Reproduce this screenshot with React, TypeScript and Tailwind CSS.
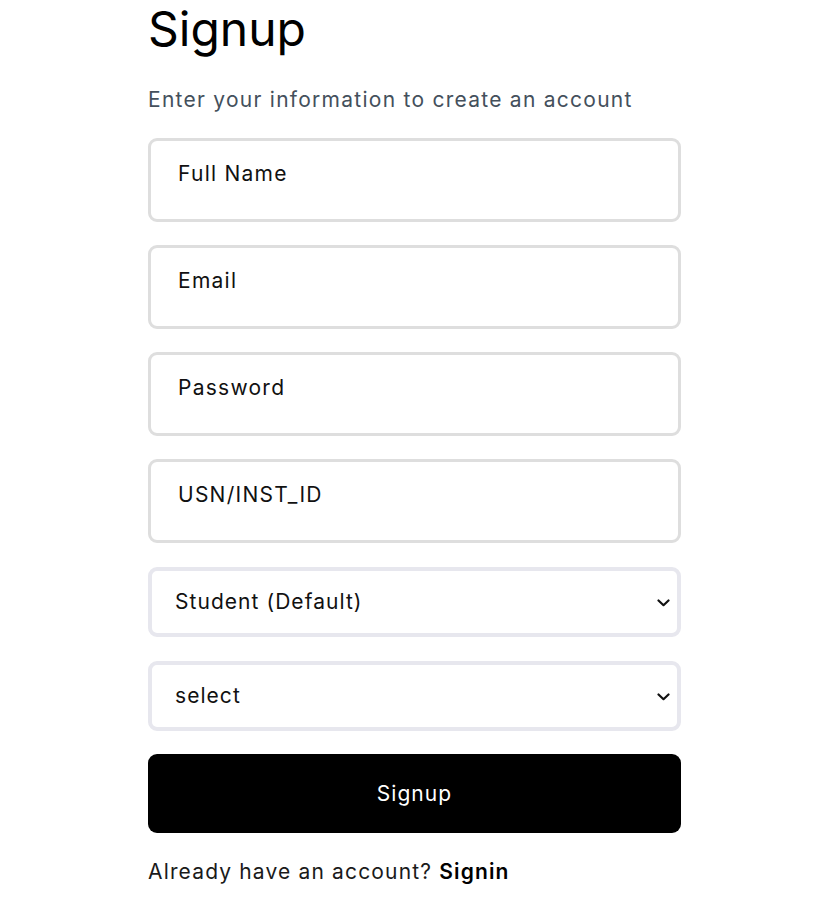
import React from 'react';

const font = { fontFamily: 'Inter, "Noto Sans", sans-serif' };

const TextField = ({ placeholder, type = 'text' }: { placeholder: string; type?: string }) => (
  <input
    type={type}
    placeholder={placeholder}
    className="h-[84px] w-full rounded-[9px] border-[3px] border-[#dedede] bg-white pl-[27px] pr-4 pb-[14px] text-[21px] tracking-[0.06em] text-[#111] outline-none placeholder:text-[#111]"
  />
);

const Chevron = () => (
  <svg width="13" height="8" viewBox="0 0 13 8" className="pointer-events-none absolute right-[11px] top-[32px]">
    <polyline points="1.5,1.5 6.5,6.2 11.5,1.5" fill="none" stroke="#111" strokeWidth="2.2" strokeLinecap="round" strokeLinejoin="round" />
  </svg>
);

const SelectField = ({ options }: { options: string[] }) => (
  <div className="relative">
    <select className="h-[70px] w-full appearance-none rounded-[9px] border-4 border-[#e7e7ee] bg-white pl-[23px] text-[21px] tracking-[0.05em] text-[#111] outline-none">
      {options.map((o) => (
        <option key={o}>{o}</option>
      ))}
    </select>
    <Chevron />
  </div>
);

export default function App() {
  return (
    <div className="min-h-screen bg-white pl-[148px] pt-[5px]" style={font}>
      <div className="flex w-[533px] flex-col">
        <h1 className="text-[48px] leading-none font-normal text-black">Signup</h1>
        <p className="mt-[33px] text-[21px] leading-[28px] tracking-[0.06em] text-[#44505c]">
          Enter your information to create an account
        </p>
        <form className="mt-[24px] flex flex-col gap-[23px]" onSubmit={(e) => e.preventDefault()}>
          <TextField placeholder="Full Name" />
          <TextField placeholder="Email" type="email" />
          <TextField placeholder="Password" type="password" />
          <TextField placeholder="USN/INST_ID" />
          <div className="mt-px flex flex-col gap-[24px]">
            <SelectField options={['Student (Default)', 'Teacher', 'Admin']} />
            <SelectField options={['select']} />
          </div>
          <button
            type="submit"
            className="h-[79px] w-full rounded-[9px] bg-black text-[21px] tracking-[0.05em] text-white"
          >
            Signup
          </button>
        </form>
        <p className="mt-[25px] text-[21px] leading-[28px] tracking-[0.055em] text-[#1a1a1a]">
          Already have an account? <span className="font-semibold text-black">Signin</span>
        </p>
      </div>
    </div>
  );
}
